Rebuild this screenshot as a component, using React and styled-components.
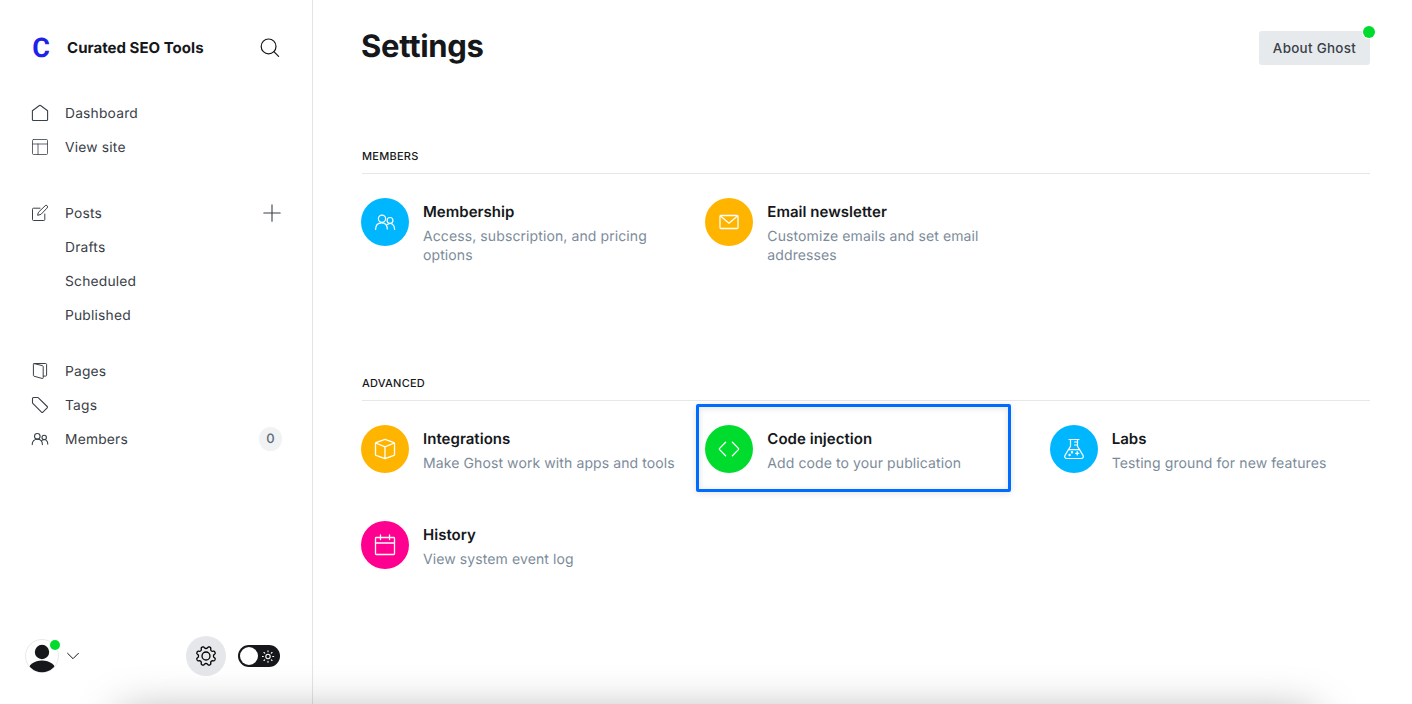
import React from "react";
import styled, { createGlobalStyle } from "styled-components";

const GlobalStyle = createGlobalStyle`
    *, *::before, *::after {
        box-sizing: border-box;
    }
    body {
        margin: 0;
        background: #fff;
        color: #15171a;
        font-family: Inter, "Liberation Sans", sans-serif;
        font-size: 14px;
        text-rendering: geometricPrecision;
        overflow: hidden;
    }
    h1, h2, h3, p {
        margin: 0;
    }
    button {
        font-family: inherit;
        border: 0;
        padding: 0;
        background: none;
    }
`;

const Page = styled.div`
    display: flex;
    height: 100vh;
`;

const Sidebar = styled.nav`
    display: flex;
    flex-direction: column;
    flex: none;
    width: 313px;
    border-right: 1px solid #e3e4ea;
`;

const SiteHeader = styled.header`
    display: flex;
    align-items: center;
    height: 96px;
    padding: 0 32px 0 32px;
`;

const Logo = styled.span`
    width: 18px;
    color: #1c22e8;
    font-family: Roboto, sans-serif;
    font-size: 27px;
    font-weight: 700;
    line-height: 32px;
    text-align: center;
`;

const SiteName = styled.span`
    flex: 1;
    margin-left: 17px;
    font-size: 15px;
    font-weight: 700;
    line-height: 20px;
    letter-spacing: 0.03px;
`;

const NavGroup = styled.div`
    display: flex;
    flex-direction: column;
    margin-bottom: ${({ $gap }) => $gap || 0}px;
`;

const NavItem = styled.a`
    display: flex;
    align-items: center;
    height: 34px;
    padding: 0 31px 0 ${({ $nested }) => ($nested ? 65 : 31)}px;
    color: #394047;
    font-size: 13.8px;
    line-height: 20px;
    letter-spacing: 0.2px;
`;

const NavLabel = styled.span`
    flex: 1;
    margin-top: 2px;
    margin-left: ${({ $nested }) => ($nested ? 0 : 16)}px;
`;

const Count = styled.span`
    width: 23px;
    height: 24px;
    margin-right: -1px;
    border-radius: 12px;
    background: #f0f2f4;
    color: #5d6b79;
    font-size: 13px;
    font-weight: 500;
    letter-spacing: 0;
    line-height: 24px;
    text-align: center;
`;

const SidebarFooter = styled.footer`
    display: flex;
    align-items: center;
    margin-top: auto;
    padding: 0 32px 28px 25px;
`;

const Avatar = styled.div`
    position: relative;
    width: 34px;
    height: 34px;
    margin-right: 7px;
`;

const Dot = styled.span`
    position: absolute;
    top: ${({ $top }) => $top}px;
    right: ${({ $right }) => $right}px;
    width: ${({ $size }) => $size}px;
    height: ${({ $size }) => $size}px;
    border-radius: 50%;
    background: #00dc2e;
    box-shadow: 0 0 0 1px #fff;
`;

const GearButton = styled.button`
    display: flex;
    align-items: center;
    justify-content: center;
    width: 40px;
    height: 40px;
    margin-left: auto;
    margin-right: 12px;
    border-radius: 50%;
    background: #e5e7eb;
`;

const Toggle = styled.button`
    display: flex;
    align-items: center;
    justify-content: space-between;
    width: 42px;
    height: 22px;
    padding: 0 5px 0 2px;
    border-radius: 11px;
    background: #15171a;
`;

const Knob = styled.span`
    width: 18px;
    height: 18px;
    border-radius: 50%;
    background: #fff;
`;

const Main = styled.main`
    flex: 1;
    padding: 31px 42px 0 48px;
`;

const MainHeader = styled.header`
    display: flex;
    justify-content: space-between;
    height: 34px;
    margin-bottom: 83px;
`;

const Title = styled.h1`
    font-size: 31px;
    font-weight: 700;
    line-height: 31px;
    letter-spacing: -0.3px;
`;

const AboutButton = styled.button`
    position: relative;
    width: 111px;
    height: 34px;
    border-radius: 3px;
    background: #e7eaed;
    color: #394047;
    font-size: 13.4px;
    font-weight: 500;
    letter-spacing: 0.3px;
`;

const Section = styled.section`
    margin-bottom: ${({ $gap }) => $gap || 0}px;
`;

const SectionTitle = styled.h2`
    height: 26px;
    margin: 0 0 24px 1px;
    border-bottom: 1px solid #e6e7e9;
    font-size: 11px;
    font-weight: 500;
    line-height: 16px;
    letter-spacing: 0.24px;
    text-transform: uppercase;
`;

const Grid = styled.div`
    display: grid;
    grid-template-columns: repeat(3, 1fr);
    column-gap: 24px;
    row-gap: 28px;
`;

const Card = styled.a`
    position: relative;
    display: flex;
    min-height: 68px;
`;

const Highlight = styled.span`
    position: absolute;
    top: -21px;
    left: -9px;
    width: 315px;
    height: 88px;
    border: 3px solid #006bff;
    border-radius: 2px;
    box-shadow: 0 1px 6px rgba(0, 0, 0, 0.12), inset 0 1px 6px rgba(0, 0, 0, 0.12);
`;

const Badge = styled.span`
    display: flex;
    flex: none;
    align-items: center;
    justify-content: center;
    width: 48px;
    height: 48px;
    margin-right: 14px;
    border-radius: 50%;
    background: ${({ $color }) => $color};
    color: #fff;
`;

const CardTitle = styled.h3`
    margin-top: 4px;
    font-size: 15px;
    font-weight: 600;
    line-height: 20px;
    letter-spacing: 0.03px;
`;

const CardText = styled.p`
    margin-top: 5px;
    color: #7c8b9a;
    font-size: 14px;
    line-height: 19px;
    letter-spacing: 0.1px;
`;

// Shadow cast on the page by the panel below the window
const BottomShadow = styled.div`
    position: fixed;
    right: 98px;
    bottom: -111px;
    left: 120px;
    height: 100px;
    box-shadow: 0 0 46px rgba(0, 0, 0, 0.36);
    pointer-events: none;
`;

const Svg = styled.svg.attrs({
    fill: "none",
    stroke: "currentColor",
    strokeLinecap: "round",
    strokeLinejoin: "round",
})`
    display: block;
    flex: none;
`;

const Icon = ({ size = 18, width = 1, children }) => (
    <Svg
        width={size}
        height={size}
        viewBox={`0 0 ${size} ${size}`}
        strokeWidth={width}
    >
        {children}
    </Svg>
);

const gearPath = () => {
    const points = [];
    for (let i = 0; i < 160; i++) {
        const a = (i / 160) * Math.PI * 2;
        const r = 8.6 + 1.15 * Math.tanh(-1.8 * Math.cos(8 * a));
        points.push(
            `${(11 + r * Math.cos(a)).toFixed(2)} ${(11 + r * Math.sin(a)).toFixed(2)}`,
        );
    }
    return `M${points.join("L")}Z`;
};

const icons = {
    search: (
        <Icon size={20} width={1.2}>
            <circle cx="8.6" cy="8.4" r="7.4" />
            <path d="M13.9 13.7 18.6 18.4" />
        </Icon>
    ),
    home: (
        <Icon width={1.1}>
            <path d="M1.4 6.8v8.7a1 1 0 0 0 1 1h13.2a1 1 0 0 0 1-1V6.8L9.6 1.5a1 1 0 0 0-1.2 0z" />
        </Icon>
    ),
    site: (
        <Icon>
            <g strokeOpacity=".8">
                <rect x="1.5" y="1.5" width="15" height="15" rx="1" />
                <path d="M1.5 6h15M7 6v10.5" />
            </g>
        </Icon>
    ),
    posts: (
        <Icon>
            <path d="M9 4.2H2.5a1 1 0 0 0-1 1v10.3a1 1 0 0 0 1 1h10.3a1 1 0 0 0 1-1V10" />
            <path d="m9.6 10.5-3 .8.8-3 6.7-6.5a1.4 1.4 0 0 1 2.1 2.1z" />
        </Icon>
    ),
    plus: (
        <Icon width={1.1}>
            <path d="M9 .8v16.4M.8 9h16.4" />
        </Icon>
    ),
    pages: (
        <Icon>
            <path d="M3.2 1.6a.8.8 0 0 0-.8.8v11c0 .4.3.7.6.8l8.3 2.3c.5.1.9-.2.9-.7V4.5c0-.4-.3-.7-.6-.8L3.2 1.6z" />
            <path d="M3.2 1.5h11.5c.5 0 .9.4.9.9v10.8c0 .5-.4.9-.9.9h-2.3" />
        </Icon>
    ),
    tags: (
        <Icon width={1.1}>
            <path d="M1.5 2.5v4.2c0 .3.1.5.3.7l8.7 8.8a1 1 0 0 0 1.4 0l4.3-4.3a1 1 0 0 0 0-1.4L7.4 1.8a1 1 0 0 0-.7-.3H2.5a1 1 0 0 0-1 1z" />
        </Icon>
    ),
    members: (
        <Icon width={1.1}>
            <circle cx="6.3" cy="6.3" r="2.8" />
            <circle cx="13.2" cy="7.4" r="2.2" />
            <path d="M1.2 14.6c0-3.5 2-5.4 5.1-5.4s5.1 1.9 5.1 5.4M11.2 10.2c3-1.7 5.6.2 5.6 3.9" />
        </Icon>
    ),
    chevron: (
        <Icon size={14} width={1}>
            <path d="m1.6 4.3 5.4 5.4 5.4-5.4" />
        </Icon>
    ),
    gear: (
        <Icon size={22} width={1.3}>
            <path d={gearPath()} />
            <circle cx="11" cy="11" r="4" />
        </Icon>
    ),
    sun: (
        <Icon size={13} width={1.1}>
            <g stroke="#fff">
                <circle cx="6" cy="6.5" r="2.2" />
                <path d="M6 .8v1M6 11.2v1M.3 6.5h1M10.7 6.5h1M2 2.5l.7.7M9.3 9.8l.7.7M2 10.5l.7-.7M9.3 3.2l.7-.7" />
            </g>
        </Icon>
    ),
    membership: (
        <Icon size={22} width={1.2}>
            <circle cx="8" cy="7.8" r="3.6" />
            <circle cx="16" cy="9.4" r="2.9" />
            <path d="M1.6 18.4c0-4.2 2.3-6.6 6-6.6s5.7 2.4 5.7 6.2M13.4 13.4c3.9-2.3 7.2.1 7.2 5" />
        </Icon>
    ),
    mail: (
        <Icon size={22} width={1.3}>
            <rect x="2" y="4.5" width="18" height="13" rx="1" />
            <path d="m2.5 5 7.6 6.6c.5.5 1.3.5 1.8 0L19.5 5" />
        </Icon>
    ),
    box: (
        <Icon size={22} width={1.3}>
            <path d="m11 1.4 9 3.3a.8.8 0 0 1 .5.7v11.2a.8.8 0 0 1-.5.7l-9 3.3-9-3.3a.8.8 0 0 1-.5-.7V5.4a.8.8 0 0 1 .5-.7zM1.7 5 11 8.8 20.3 5M11 8.8v11.8" />
        </Icon>
    ),
    code: (
        <Icon size={22} width={1.3}>
            <path d="M7.6 4.2 1.6 10.4a.9.9 0 0 0 0 1.2l6 6.2M14.4 4.2l6 6.2a.9.9 0 0 1 0 1.2l-6 6.2" />
        </Icon>
    ),
    flask: (
        <Icon size={22} width={1.2}>
            <path d="M6 1.5h10M7.5 1.5v6.7L2 17.4c-.9 1.6.1 3.1 1.8 3.1h14.4c1.7 0 2.7-1.5 1.8-3.1l-5.5-9.2V1.5M5.2 11.7h11.6M11.5 4h3M11.5 7h3M14.2 13.7v3.2M12.6 15.3h3.2" />
            <circle cx="9" cy="14.3" r=".6" />
            <circle cx="6.6" cy="17" r=".6" />
        </Icon>
    ),
    calendar: (
        <Icon size={22} width={1.3}>
            <rect x="1.5" y="3.5" width="19" height="17" rx=".8" />
            <path d="M1.5 9h19M6.5 1v4.5M15.5 1v4.5" />
        </Icon>
    ),
};

const navGroups = [
    {
        gap: 32,
        items: [
            { label: "Dashboard", icon: "home" },
            { label: "View site", icon: "site" },
        ],
    },
    {
        gap: 22,
        items: [
            { label: "Posts", icon: "posts", extra: icons.plus },
            { label: "Drafts" },
            { label: "Scheduled" },
            { label: "Published" },
        ],
    },
    {
        items: [
            { label: "Pages", icon: "pages" },
            { label: "Tags", icon: "tags" },
            { label: "Members", icon: "members", extra: <Count>0</Count> },
        ],
    },
];

const sections = [
    {
        title: "Members",
        gap: 109,
        cards: [
            {
                title: "Membership",
                text: "Access, subscription, and pricing options",
                icon: "membership",
                color: "#00b7ff",
            },
            {
                title: "Email newsletter",
                text: "Customize emails and set email addresses",
                icon: "mail",
                color: "#ffb400",
            },
        ],
    },
    {
        title: "Advanced",
        cards: [
            {
                title: "Integrations",
                text: "Make Ghost work with apps and tools",
                icon: "box",
                color: "#ffb400",
            },
            {
                title: "Code injection",
                text: "Add code to your publication",
                icon: "code",
                color: "#00dc2e",
                highlighted: true,
            },
            {
                title: "Labs",
                text: "Testing ground for new features",
                icon: "flask",
                color: "#00b7ff",
            },
            {
                title: "History",
                text: "View system event log",
                icon: "calendar",
                color: "#ff0090",
            },
        ],
    },
];

const App = () => {
    return (
        <>
            <GlobalStyle />
            <Page>
                <Sidebar>
                    <SiteHeader>
                        <Logo>C</Logo>
                        <SiteName>Curated SEO Tools</SiteName>
                        {icons.search}
                    </SiteHeader>
                    {navGroups.map((group, index) => (
                        <NavGroup key={index} $gap={group.gap}>
                            {group.items.map(({ label, icon, extra }) => (
                                <NavItem key={label} $nested={!icon}>
                                    {icon && icons[icon]}
                                    <NavLabel $nested={!icon}>{label}</NavLabel>
                                    {extra}
                                </NavItem>
                            ))}
                        </NavGroup>
                    ))}
                    <SidebarFooter>
                        <Avatar>
                            <svg width="34" height="34" viewBox="0 0 34 34">
                                <clipPath id="avatar">
                                    <circle cx="17" cy="17" r="16.2" />
                                </clipPath>
                                <circle
                                    cx="17"
                                    cy="17"
                                    r="16.5"
                                    fill="#fff"
                                    stroke="#e8e9eb"
                                />
                                <g clipPath="url(#avatar)" fill="#15171a">
                                    <circle cx="17" cy="13" r="7.2" />
                                    <ellipse cx="17" cy="32" rx="14" ry="10.5" />
                                </g>
                            </svg>
                            <Dot $size={10} $top={1} $right={-1} />
                        </Avatar>
                        {icons.chevron}
                        <GearButton>{icons.gear}</GearButton>
                        <Toggle>
                            <Knob />
                            {icons.sun}
                        </Toggle>
                    </SidebarFooter>
                </Sidebar>
                <Main>
                    <MainHeader>
                        <Title>Settings</Title>
                        <AboutButton>
                            About Ghost
                            <Dot $size={12} $top={-5} $right={-5} />
                        </AboutButton>
                    </MainHeader>
                    {sections.map((section) => (
                        <Section key={section.title} $gap={section.gap}>
                            <SectionTitle>{section.title}</SectionTitle>
                            <Grid>
                                {section.cards.map((card) => (
                                    <Card key={card.title}>
                                        <Badge $color={card.color}>
                                            {icons[card.icon]}
                                        </Badge>
                                        <div>
                                            <CardTitle>{card.title}</CardTitle>
                                            <CardText>{card.text}</CardText>
                                        </div>
                                        {card.highlighted && <Highlight />}
                                    </Card>
                                ))}
                            </Grid>
                        </Section>
                    ))}
                </Main>
            </Page>
            <BottomShadow />
        </>
    );
};

export default App;
